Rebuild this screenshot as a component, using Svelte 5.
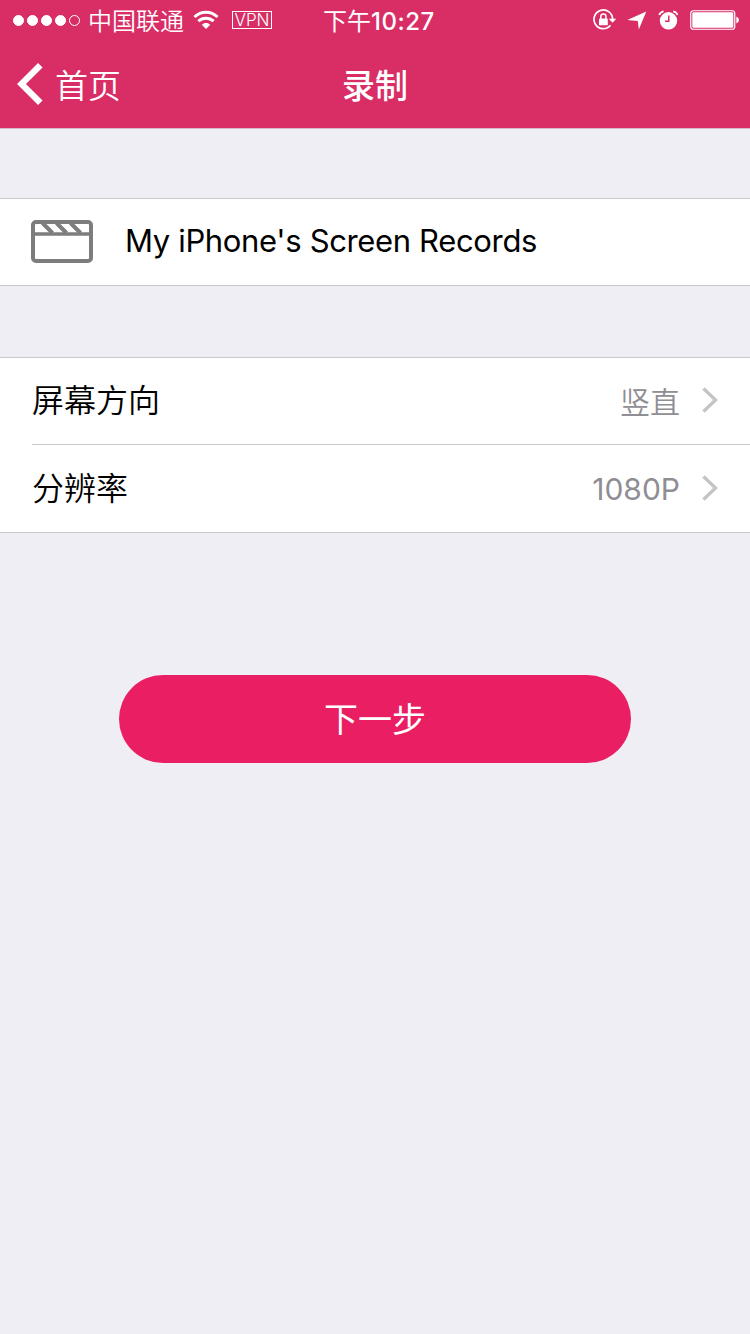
<script lang="ts">
	const signal = [true, true, true, true, false];

	const settings = [
		{ label: '屏幕方向', value: '竖直', latin: false },
		{ label: '分辨率', value: '1080P', latin: true }
	];
</script>

<div class="screen">
	<header>
		<div class="status">
			<div class="status-left">
				<div class="signal">
					{#each signal as on}
						<i class:on></i>
					{/each}
				</div>
				<span class="carrier">中国联通</span>
				<svg class="wifi" width="26" height="20" viewBox="0 0 26 20">
					<g fill="none" stroke="#fff" stroke-width="3">
						<path d="M1.500 7C8 .6 18 .6 24.500 7" />
						<path d="M5.300 11.200C9.600 7.100 16.400 7.100 20.700 11.200" />
					</g>
					<path d="M8.800 14.700C11 12.400 15 12.400 17.200 14.700L13 19Z" fill="#fff" />
				</svg>
				<span class="vpn">VPN</span>
			</div>
			<span class="time">下午<b>10:27</b></span>
			<div class="status-right">
				<!-- блокировка поворота -->
				<svg width="24" height="22" viewBox="0 0 24 22">
					<path d="M18.500 16.200A9.300 9.300 0 1 1 20.600 10.500" fill="none" stroke="#fff" stroke-width="1.700" />
					<path d="M16.800 9.800H24.200L20.500 13.800Z" fill="#fff" />
					<rect x="7" y="9.600" width="8.800" height="6.600" rx=".8" fill="#fff" />
					<path d="M8.800 10V7.700a2.600 2.600 0 0 1 5.200 0V10" fill="none" stroke="#fff" stroke-width="1.500" />
				</svg>
				<svg class="location" width="20" height="20" viewBox="0 0 20 20">
					<path d="M19.300 1.500L11.800 19.500L10.800 11L.3 10Z" fill="#fff" />
				</svg>
				<svg class="alarm" width="20" height="20" viewBox="0 0 20 20">
					<circle cx="10.500" cy="10.800" r="8.700" fill="#fff" />
					<path d="M1.200 5Q2.400 2 5.600 1.400M19.600 5Q18.400 2 15.200 1.400" fill="none" stroke="#fff" stroke-width="1.800" />
					<path d="M10.800 5.500V11.300H7" fill="none" stroke="#d92d66" stroke-width="1.500" />
				</svg>
				<svg class="battery" width="50" height="20" viewBox="0 0 50 20">
					<rect x=".75" y=".75" width="44" height="18.500" rx="2.500" fill="none" stroke="#fff" stroke-width="1.200" />
					<rect x="2.300" y="2.300" width="41" height="15.400" rx="1.200" fill="#fff" />
					<path d="M46.300 6.500Q49 7.500 49 10T46.300 13.500Z" fill="#fff" />
				</svg>
			</div>
		</div>

		<nav>
			<div class="back">
				<svg width="26" height="42" viewBox="0 0 26 42">
					<path d="M23.300 2.200L4.500 21L23.300 39.800" fill="none" stroke="#fff" stroke-width="6.300" />
				</svg>
				<span>首页</span>
			</div>
			<h1>录制</h1>
		</nav>
	</header>

	<section class="group record">
		<svg width="62" height="43" viewBox="0 0 62 43">
			<g fill="none" stroke="#7d7d7d">
				<rect x="2" y="2" width="58" height="39" rx="3" stroke-width="4" />
				<path d="M2 14H60" stroke-width="3.500" />
				<path d="M11.500 3L21.500 13M25.500 3L35.500 13M39.500 3L49.500 13" stroke-width="4" />
			</g>
		</svg>
		<span class="name">My iPhone's Screen Records</span>
	</section>

	<section class="group settings">
		{#each settings as item}
			<div class="row">
				<span class="label">{item.label}</span>
				<span class="value" class:latin={item.latin}>{item.value}</span>
				<svg width="16" height="26" viewBox="0 0 16 26">
					<path d="M1.500 1.500L13.500 13L1.500 24.500" fill="none" stroke="#c4c4c7" stroke-width="3.300" />
				</svg>
			</div>
		{/each}
	</section>

	<button>下一步</button>
</div>

<style>
	:global(body) {
		background: #efeef4;
	}

	.screen {
		min-height: 1334px;
		background: #efeef4;
		font-family: Inter, 'Noto Sans CJK SC', sans-serif;
		color: #000;
	}

	header {
		height: 129px;
		background: #d92d66;
		color: #fff;
		border-bottom: 1px solid #d3bcc8;
		box-sizing: border-box;
	}

	.status {
		display: grid;
		grid-template-columns: 323px 1fr auto;
		align-items: center;
		height: 40px;
		padding-right: 10px;
	}

	.status-left,
	.status-right,
	.signal {
		display: flex;
		align-items: center;
	}

	.status-left {
		padding-left: 13px;
	}

	.signal {
		gap: 3px;
		margin-right: 8px;
	}

	.signal i {
		width: 11px;
		height: 11px;
		box-sizing: border-box;
		border: 1px solid #fff;
		border-radius: 50%;
	}

	.signal .on {
		background: #fff;
	}

	.carrier {
		padding-top: 3px;
		font-size: 24px;
		line-height: 37px;
		font-weight: 350;
	}

	.wifi {
		margin-left: 9px;
	}

	.vpn {
		margin-left: 13px;
		width: 38px;
		height: 16px;
		border: 1px solid #fff;
		font-size: 17px;
		line-height: 17px;
		font-weight: 300;
		text-align: center;
	}

	.time {
		padding-top: 3px;
		font-size: 24px;
		line-height: 37px;
		white-space: nowrap;
	}

	.time b {
		font-weight: 500;
		letter-spacing: 0.5px;
	}

	.location {
		margin-left: 11px;
	}

	.alarm {
		margin-left: 11px;
	}

	.battery {
		margin-left: 12px;
	}

	nav {
		display: grid;
		grid-template-columns: 1fr auto 1fr;
		align-items: center;
		height: 88px;
	}

	.back {
		display: flex;
		align-items: center;
		gap: 12px;
		padding-left: 17px;
		font-size: 33px;
		font-weight: 350;
	}

	.back span,
	h1 {
		padding-bottom: 1px;
	}

	h1 {
		margin: 0;
		font-size: 33px;
		font-weight: 500;
	}

	.group {
		background: #fff;
		border-top: 1px solid #c9c8cd;
		border-bottom: 1px solid #c9c8cd;
	}

	.record {
		display: flex;
		align-items: center;
		gap: 32px;
		height: 86px;
		margin-top: 69px;
		padding-left: 31px;
	}

	.record svg {
		margin-bottom: 2px;
	}

	.name {
		padding-bottom: 4px;
		font-size: 31px;
		letter-spacing: -0.35px;
	}

	.settings {
		margin-top: 71px;
		padding-left: 32px;
	}

	.row {
		display: flex;
		align-items: center;
		height: 85px;
		padding-right: 32px;
		padding-bottom: 2px;
	}

	.row:first-child {
		height: 84px;
		border-bottom: 1px solid #c9c8cd;
	}

	.label {
		flex: 1;
		padding-bottom: 4px;
		font-size: 32px;
		font-weight: 350;
	}

	.value {
		margin-right: 22px;
		font-size: 30px;
		font-weight: 350;
		color: #8e8e93;
	}

	.latin {
		padding-top: 3px;
		font-weight: 400;
	}

	button {
		display: block;
		width: 512px;
		height: 88px;
		margin: 142px auto 0;
		padding: 0 0 3px;
		border: 0;
		border-radius: 44px;
		background: #e91e63;
		color: #fff;
		font-family: inherit;
		font-size: 34px;
		font-weight: 400;
	}
</style>
